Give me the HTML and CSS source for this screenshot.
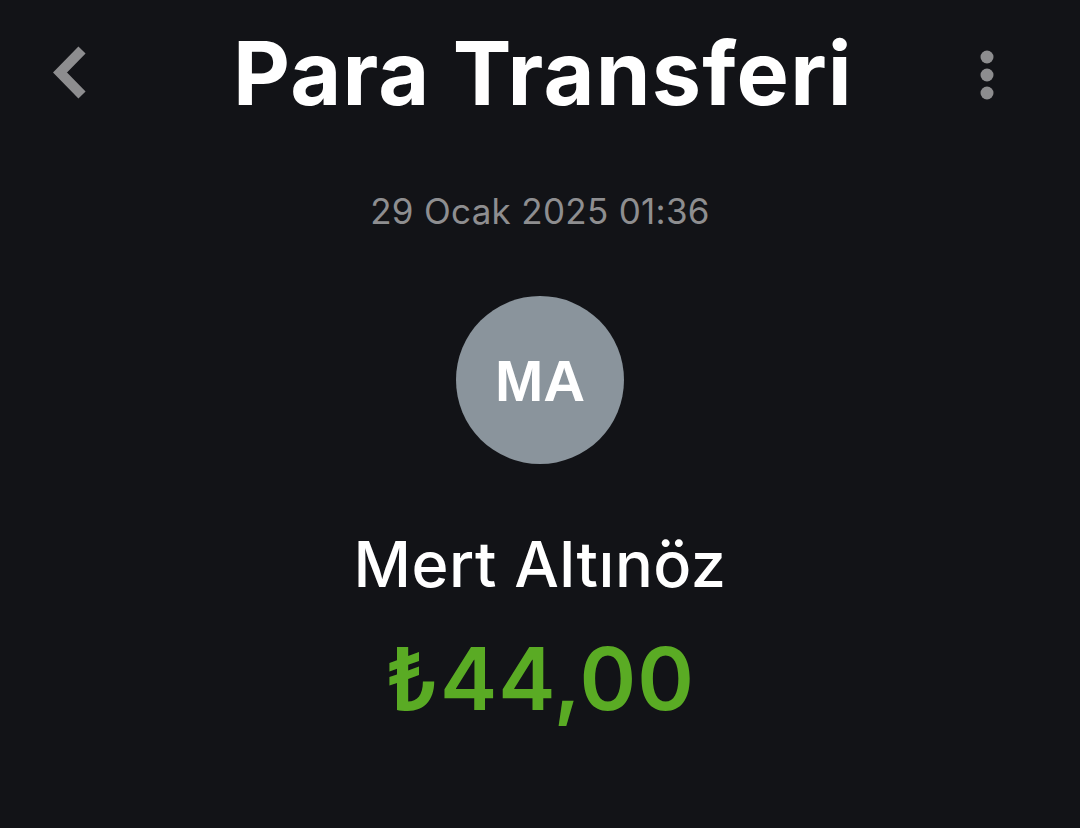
FILE: index.html
```html
<!DOCTYPE html>
<html lang="tr">
<head>
<meta charset="utf-8">
<link rel="stylesheet" href="styles.css">
</head>
<body>
<div class="screen">
  <header class="topbar">
    <button class="icon-btn back" aria-label="Geri">
      <svg width="42" height="58" viewBox="0 0 42 58"><polyline points="33,6 11,28.5 33,51" fill="none" stroke="#8d8d8f" stroke-width="10" stroke-linejoin="miter" stroke-linecap="butt"/></svg>
    </button>
    <h1 class="title">Para Transferi</h1>
    <button class="icon-btn more" aria-label="Menü">
      <svg width="20" height="60" viewBox="0 0 20 60"><circle cx="10" cy="13" r="6.5" fill="#8d8d8f"/><circle cx="10" cy="31" r="6.5" fill="#8d8d8f"/><circle cx="10" cy="49" r="6.5" fill="#8d8d8f"/></svg>
    </button>
  </header>
  <main class="content">
    <div class="date">29 Ocak 2025 01:36</div>
    <div class="avatar">MA</div>
    <div class="name">Mert Altınöz</div>
    <div class="amount">₺44,00</div>
  </main>
</div>
</body>
</html>
```

FILE: styles.css
```css
html, body {
  margin: 0;
  padding: 0;
  background: #121317;
}
.screen {
  width: 1080px;
  height: 828px;
  background: #121317;
  font-family: Inter, "Noto Sans", sans-serif;
  color: #ffffff;
  overflow: hidden;
}
.topbar {
  display: flex;
  align-items: flex-start;
  justify-content: space-between;
  height: 150px;
  padding: 0 83px 0 49px;
  box-sizing: border-box;
}
.icon-btn {
  background: none;
  border: 0;
  padding: 0;
  display: flex;
}
.back { margin-top: 44px; }
.more { margin-top: 44px; }
.title {
  margin: 21px 0 0 18px;
  font-size: 88px;
  line-height: 1.2;
  font-weight: 700;
  letter-spacing: 1.2px;
  color: #ffffff;
}
.content {
  display: flex;
  flex-direction: column;
  align-items: center;
}
.date {
  margin-top: 40px;
  font-size: 35px;
  color: #8e8e90;
  letter-spacing: 0.3px;
}
.avatar {
  margin-top: 64px;
  width: 168px;
  height: 168px;
  border-radius: 50%;
  background: #8a949c;
  display: flex;
  align-items: center;
  justify-content: center;
  font-family: "Liberation Sans", Arial, sans-serif;
  font-weight: 700;
  font-size: 58px;
  color: #ffffff;
}
.name {
  margin-top: 62px;
  font-size: 63px;
  font-weight: 500;
  color: #ffffff;
  letter-spacing: 0.5px;
}
.amount {
  margin-top: 25px;
  font-size: 86px;
  font-weight: 600;
  color: #5aab24;
  letter-spacing: 1px;
}
```
